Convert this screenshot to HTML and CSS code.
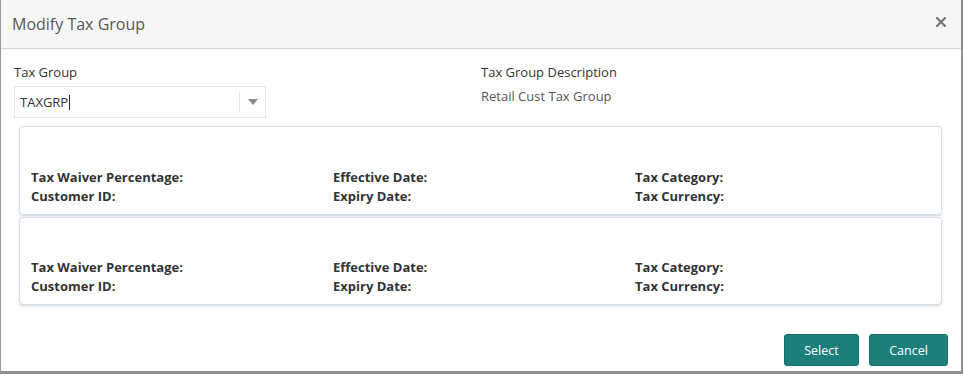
FILE: index.html
```html
<!DOCTYPE html>
<html>
<head>
<meta charset="utf-8">
<link rel="stylesheet" href="styles.css">
</head>
<body>
<div class="dialog">
  <div class="header">
    <div class="title">Modify Tax Group</div>
    <div class="close"><svg width="10" height="10" viewBox="0 0 10 10"><path d="M1 1 L9 9 M9 1 L1 9" stroke="#777" stroke-width="2.2" stroke-linecap="square"/></svg></div>
  </div>
  <div class="body">
    <div class="fields">
      <div class="field">
        <div class="label">Tax Group</div>
        <div class="select">
          <span class="value">TAXGRP<span class="caret"></span></span>
          <span class="arrow"><svg width="10" height="6" viewBox="0 0 10 6"><path d="M0 0 L10 0 L5 6 Z" fill="#8a8a8a"/></svg></span>
        </div>
      </div>
      <div class="field">
        <div class="label">Tax Group Description</div>
        <div class="desc">Retail Cust Tax Group</div>
      </div>
    </div>
    <div class="cards">
      <div class="card">
        <div class="col"><div>Tax Waiver Percentage:</div><div>Customer ID:</div></div>
        <div class="col"><div>Effective Date:</div><div>Expiry Date:</div></div>
        <div class="col"><div>Tax Category:</div><div>Tax Currency:</div></div>
      </div>
      <div class="card">
        <div class="col"><div>Tax Waiver Percentage:</div><div>Customer ID:</div></div>
        <div class="col"><div>Effective Date:</div><div>Expiry Date:</div></div>
        <div class="col"><div>Tax Category:</div><div>Tax Currency:</div></div>
      </div>
    </div>
  </div>
  <div class="footer">
    <button class="btn btn-select">Select</button>
    <button class="btn btn-cancel">Cancel</button>
  </div>
</div>
</body>
</html>
```
FILE: styles.css
```css
html, body {
  margin: 0;
  padding: 0;
  background: #ffffff;
}
body {
  font-family: "Open Sans", "Noto Sans", sans-serif;
  color: #333;
  width: 963px;
  height: 376px;
  overflow: hidden;
}
.dialog {
  box-sizing: border-box;
  width: 963px;
  height: 374px;
  border-left: 1px solid #9a9a9a;
  border-right: 2px solid #8e8e8e;
  border-bottom: 3px solid #8e8e8e;
  background: #fff;
  display: flex;
  flex-direction: column;
}
.header {
  height: 49px;
  box-sizing: border-box;
  background: #f6f6f6;
  border-bottom: 1px solid #d4d4d4;
  display: flex;
  align-items: center;
  justify-content: space-between;
  padding: 0 15px 0 11px;
}
.title {
  font-size: 16px;
  color: #585858;
}
.close {
  display: flex;
  margin-top: -4px;
}
.body {
  padding: 14px 19px 0 13px;
}
.fields {
  display: flex;
}
.field {
  width: 467px;
  flex-shrink: 0;
}
.field + .field {
  flex-shrink: 1;
  width: auto;
}
.label {
  font-size: 13px;
  color: #333;
  line-height: 18px;
}
.select {
  margin-top: 5px;
  width: 252px;
  height: 32px;
  box-sizing: border-box;
  border: 1px solid #e6e6e6;
  display: flex;
  align-items: center;
}
.value {
  flex: 1;
  padding-left: 5px;
  font-size: 13px;
  color: #333;
  display: flex;
  align-items: center;
}
.caret {
  display: inline-block;
  width: 1px;
  height: 15px;
  background: #222;
  margin-left: 1px;
}
.arrow {
  width: 25px;
  height: 20px;
  border-left: 1px solid #e6e6e6;
  display: flex;
  align-items: center;
  justify-content: center;
}
.desc {
  margin-top: 6px;
  font-size: 13px;
  color: #555;
}
.cards {
  margin-top: 8px;
  padding-left: 5px;
  display: flex;
  flex-direction: column;
  gap: 2px;
}
.card {
  box-sizing: border-box;
  height: 89px;
  border: 1px solid #d5dee8;
  border-radius: 4px;
  box-shadow: 0 1px 2px rgba(120,140,160,0.35);
  display: flex;
  align-items: flex-end;
  padding: 0 0 8px 11px;
}
.card + .card {
  height: 88px;
  padding-bottom: 8px;
}
.col {
  width: 302px;
  font-size: 13px;
  font-weight: bold;
  color: #333;
  line-height: 19px;
}
.footer {
  margin-top: auto;
  display: flex;
  justify-content: flex-end;
  gap: 10px;
  padding: 0 13px 5px 0;
}
.btn {
  height: 32px;
  border: 1px solid #11706a;
  border-radius: 3px;
  background: #1c7f79;
  color: #fff;
  font-family: "Open Sans", "Noto Sans", sans-serif;
  font-size: 12.5px;
  padding: 0;
}
.btn-select { width: 75px; }
.btn-cancel { width: 79px; }
```
